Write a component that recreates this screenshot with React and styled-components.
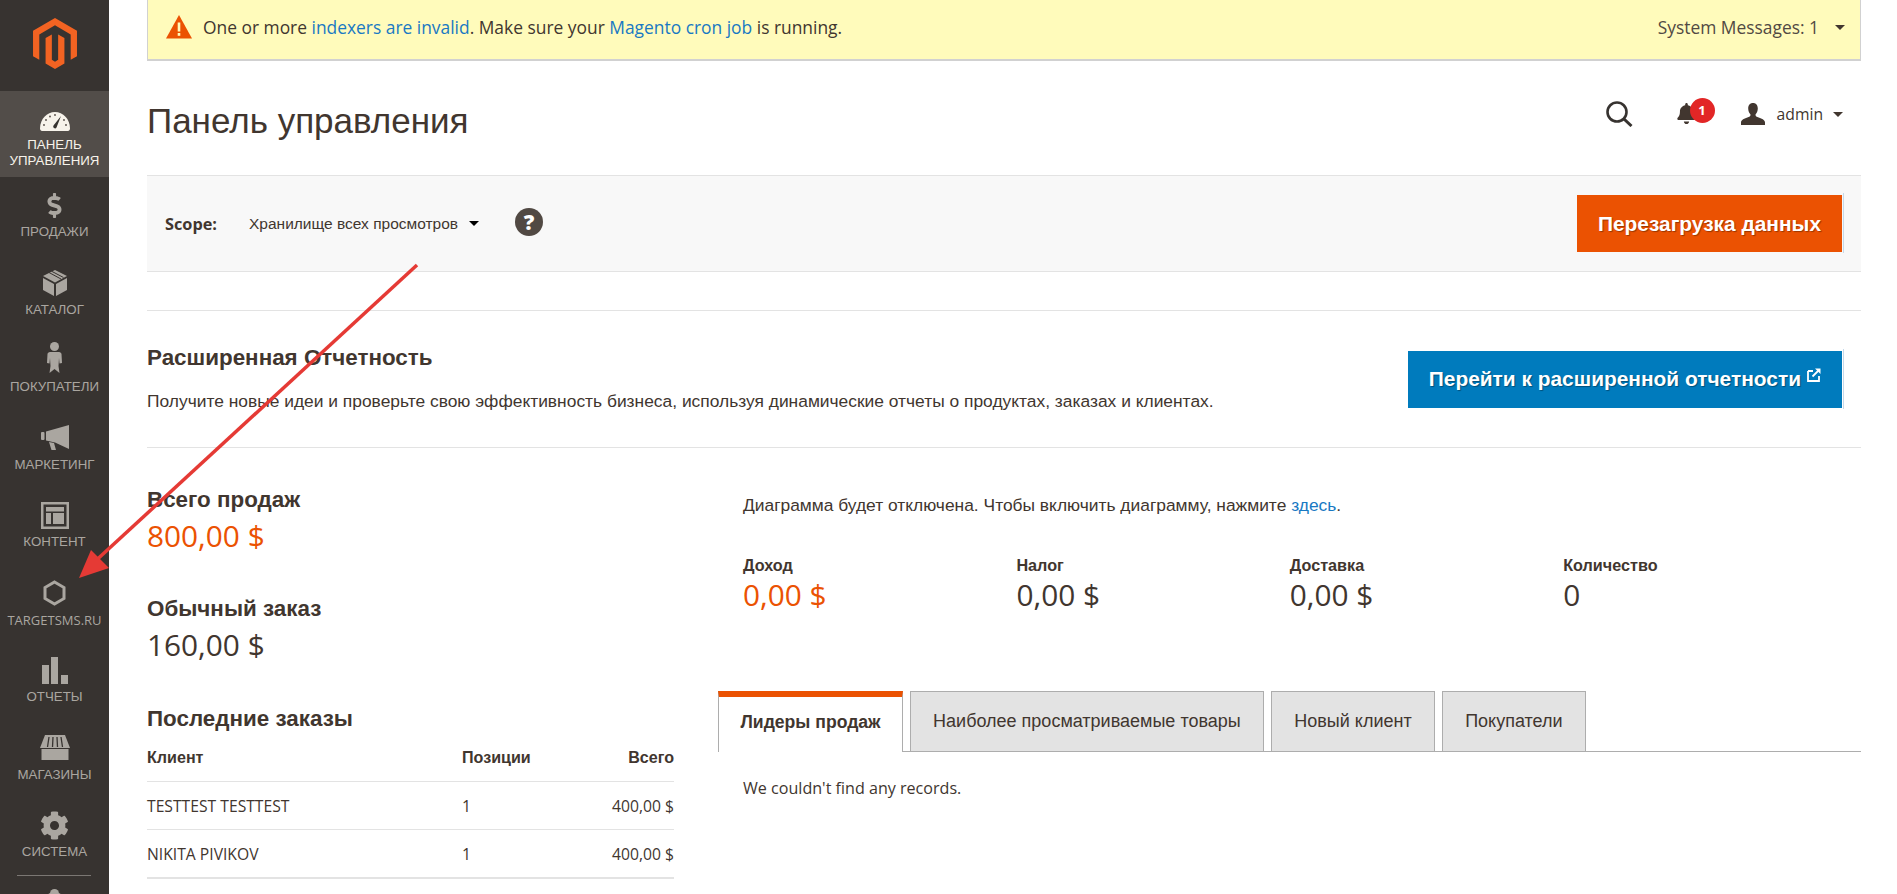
import React from 'react';
import styled, { createGlobalStyle } from 'styled-components';
import { FaDollarSign, FaCog, FaBell } from 'react-icons/fa';

const GlobalStyle = createGlobalStyle`
  html, body {
    margin: 0;
    padding: 0;
    background: #fff;
  }
  body {
    color: #41362f;
    font-family: "Open Sans", sans-serif;
  }
  * {
    box-sizing: border-box;
  }
`;

const CYR = '"Liberation Sans", Arial, sans-serif';
const LAT = '"Open Sans", "Noto Sans", sans-serif';

const Page = styled.div`
  position: relative;
  display: flex;
  width: 1897px;
  height: 894px;
  overflow: hidden;
`;

const Sidebar = styled.nav`
  flex: 0 0 109px;
  height: 894px;
  overflow: hidden;
  background: #373330;
`;

const LogoBox = styled.div`
  height: 91px;
  display: flex;
  justify-content: center;
  padding-top: 18px;
  svg {
    display: block;
    width: 44px;
    height: 51px;
    fill: #f26322;
  }
`;

const MenuItem = styled.a`
  display: flex;
  flex-direction: column;
  align-items: center;
  height: ${(p) => (p.$active ? '86px' : '77.5px')};
  padding-top: ${(p) => (p.$active ? '12px' : '10px')};
  background: ${(p) => (p.$active ? '#524d49' : 'transparent')};
  color: ${(p) => (p.$active ? '#f7f3eb' : '#aaa6a0')};
`;

const MenuIcon = styled.span`
  display: flex;
  align-items: center;
  justify-content: center;
  height: 36px;
  padding-bottom: ${(p) => p.$lift || 0}px;
  svg {
    display: block;
    fill: currentColor;
  }
`;

const MenuLabel = styled.span`
  margin-top: ${(p) => (p.$active ? '-2px' : '1px')};
  font-family: ${(p) => (p.$latin ? LAT : CYR)};
  font-size: ${(p) => (p.$latin ? '13px' : '13.3px')};
  line-height: 16px;
  text-align: center;
  white-space: nowrap;
`;

const MenuDivider = styled.div`
  height: 1px;
  margin: 0.5px 18px 0 17px;
  background: #7b7773;
`;

const PartnersIcon = styled.div`
  display: flex;
  justify-content: center;
  margin-top: 13px;
  color: #aaa6a0;
  svg {
    display: block;
    fill: currentColor;
  }
`;

const Main = styled.main`
  flex: 1;
  min-width: 0;
  padding: 0 36px 0 38px;
`;

const Banner = styled.div`
  display: flex;
  align-items: center;
  justify-content: space-between;
  height: 61px;
  padding: 0 15px 5px 18px;
  background: #fffbbb;
  border-left: 1px solid #d1d1d1;
  border-right: 1px solid #d1d1d1;
  border-bottom: 2px solid #d1d1d1;
  font-size: 17.4px;
`;

const BannerText = styled.div`
  display: flex;
  align-items: center;
  gap: 11px;
  white-space: pre;
  svg {
    display: block;
  }
`;

const TextLink = styled.a`
  color: #1979c3;
`;

const SystemMessages = styled.div`
  display: flex;
  align-items: center;
  gap: 16px;
  color: #514943;
`;

const Caret = styled.i`
  display: block;
  width: 0;
  height: 0;
  border-left: ${(p) => p.$size || 5}px solid transparent;
  border-right: ${(p) => p.$size || 5}px solid transparent;
  border-top: ${(p) => p.$size || 5}px solid ${(p) => p.$color || '#41362f'};
`;

const PageHeader = styled.header`
  display: flex;
  align-items: center;
  justify-content: space-between;
  height: 114px;
  padding: 0 18px 0 0;
`;

const Title = styled.h1`
  margin: 6px 0 0;
  font-family: ${CYR};
  font-size: 35px;
  font-weight: 400;
  line-height: 42px;
  color: #41362f;
`;

const HeaderActions = styled.div`
  display: flex;
  align-items: center;
  margin-bottom: 8px;
`;

const SearchButton = styled.span`
  display: block;
  margin-right: 43px;
  svg {
    display: block;
  }
`;

const BellWrap = styled.span`
  position: relative;
  display: block;
  width: 20px;
  height: 22px;
  margin-right: 45px;
  color: #41362f;
  svg {
    display: block;
  }
`;

const Badge = styled.b`
  position: absolute;
  top: -5px;
  left: 14px;
  width: 25px;
  height: 25px;
  border-radius: 50%;
  background: #e22626;
  color: #fff;
  font-family: ${LAT};
  font-size: 13px;
  font-weight: 700;
  line-height: 25px;
  text-align: center;
`;

const UserMenu = styled.div`
  display: flex;
  align-items: center;
  font-size: 15.7px;
  color: #41362f;
  svg {
    display: block;
    margin-right: 12px;
  }
  ${Caret} {
    margin-left: 10px;
  }
`;

const ScopeBar = styled.div`
  display: flex;
  align-items: center;
  justify-content: space-between;
  height: 97px;
  padding: 0 19px 0 18px;
  background: #f8f8f8;
  border-top: 1px solid #e3e3e3;
  border-bottom: 1px solid #e3e3e3;
`;

const ScopeLeft = styled.div`
  display: flex;
  align-items: center;
`;

const ScopeLabel = styled.span`
  width: 84px;
  font-size: 16.3px;
  font-weight: 700;
  color: #41362f;
`;

const ScopeValue = styled.span`
  margin-right: 11px;
  font-family: ${CYR};
  font-size: 15.5px;
  color: #41362f;
`;

const HelpCircle = styled.span`
  width: 28px;
  height: 28px;
  margin: -3px 0 0 36px;
  border-radius: 50%;
  background: #514943;
  color: #fff;
  font-family: ${LAT};
  font-size: 21px;
  font-weight: 800;
  line-height: 28px;
  text-align: center;
`;

const ActionButton = styled.a`
  position: relative;
  display: flex;
  align-items: center;
  justify-content: center;
  gap: 6px;
  height: 57px;
  padding: 0 21px;
  background: ${(p) => (p.$blue ? '#007bbd' : '#eb5202')};
  color: #fff;
  font-family: ${CYR};
  font-size: 20.9px;
  font-weight: 700;
  text-shadow: 1px 1px 1px rgba(0, 0, 0, 0.35);
  white-space: nowrap;
  &::after {
    content: '';
    position: absolute;
    top: -2px;
    bottom: -1px;
    right: -2px;
    width: 1px;
    background: #c5d9ea;
  }
  svg {
    display: block;
    margin-bottom: 8px;
  }
`;

const AdvancedBox = styled.section`
  display: flex;
  align-items: center;
  justify-content: space-between;
  height: 138px;
  margin-top: 38px;
  padding-right: 19px;
  border-top: 1px solid #e3e3e3;
  border-bottom: 1px solid #e3e3e3;
`;

const SectionTitle = styled.h3`
  margin: 0;
  font-family: ${CYR};
  font-size: 22.4px;
  font-weight: 700;
  line-height: 24px;
  color: #41362f;
`;

const AdvancedDesc = styled.p`
  margin: 19px 0 0;
  font-family: ${CYR};
  font-size: 17.4px;
  line-height: 24px;
  color: #41362f;
`;

const Dashboard = styled.div`
  display: grid;
  grid-template-columns: 527px 1fr;
  column-gap: 44px;
  padding-top: 40px;
`;

const Totals = styled.div`
  margin-bottom: ${(p) => p.$gap}px;
`;

const BigValue = styled.div`
  margin-top: 4px;
  font-family: ${LAT};
  font-size: 29.8px;
  font-weight: 500;
  line-height: 40px;
  color: ${(p) => (p.$accent ? '#eb5202' : '#41362f')};
`;

const OrdersTable = styled.table`
  width: 100%;
  margin-top: 3px;
  border-collapse: collapse;
  table-layout: fixed;
`;

const Th = styled.th`
  width: ${(p) => p.$width || 'auto'};
  height: 47px;
  padding: 0;
  border-bottom: 1px solid #e3e3e3;
  font-family: ${CYR};
  font-size: 16.1px;
  font-weight: 700;
  text-align: ${(p) => (p.$right ? 'right' : 'left')};
  color: #41362f;
`;

const Td = styled.td`
  height: ${(p) => (p.$last ? '49px' : '48px')};
  padding: 1px 0 0;
  border-bottom: ${(p) => (p.$last ? '2px' : '1px')} solid #e3e3e3;
  font-family: ${LAT};
  font-size: 15.7px;
  text-align: ${(p) => (p.$right ? 'right' : 'left')};
  color: #41362f;
`;

const RightColumn = styled.div`
  padding-top: 5px;
`;

const ChartNote = styled.p`
  margin: 0 0 0 25px;
  font-family: ${CYR};
  font-size: 17.4px;
  line-height: 24px;
  color: #41362f;
`;

const StatsGrid = styled.div`
  display: grid;
  grid-template-columns: repeat(4, 273.4px);
  margin: 36px 0 0 25px;
`;

const StatLabel = styled.div`
  font-family: ${CYR};
  font-size: 16.2px;
  font-weight: 700;
  line-height: 24px;
  color: #41362f;
`;

const StatValue = styled(BigValue)`
  margin-top: -2px;
`;

const TabBar = styled.div`
  display: flex;
  gap: 6.5px;
  height: 61px;
  margin-top: 76px;
  border-bottom: 1px solid #adadad;
`;

const Tab = styled.div`
  height: ${(p) => (p.$active ? '61px' : '60px')};
  padding: ${(p) => (p.$active ? '0 21.5px' : '0 22.5px')};
  border: 1px solid #adadad;
  border-top: ${(p) => (p.$active ? '6px solid #eb5202' : '1px solid #adadad')};
  border-bottom: ${(p) => (p.$active ? 'none' : '0')};
  background: ${(p) => (p.$active ? '#fff' : '#e3e3e3')};
  font-family: ${CYR};
  font-size: ${(p) => (p.$active ? '17.6px' : '18px')};
  font-weight: ${(p) => (p.$active ? 700 : 400)};
  line-height: ${(p) => (p.$active ? '51px' : '58px')};
  color: #41362f;
  white-space: nowrap;
`;

const EmptyNote = styled.p`
  margin: 24px 0 0 25px;
  font-family: ${LAT};
  font-size: 16.1px;
  line-height: 24px;
  color: #41362f;
`;

const ArrowOverlay = styled.svg`
  position: absolute;
  top: 0;
  left: 0;
  pointer-events: none;
`;

const MagentoLogo = () => (
  <svg viewBox="1.6 0 20.8 24">
    <path d="M12 24l-4.455-2.572v-12l2.97-1.715v12.001l1.485.902 1.485-.902V7.713l2.971 1.715v12L12 24zM22.391 6v12l-2.969 1.714V7.713L12 3.43 4.574 7.713v12.001L1.609 18V6L12 0l10.391 6z" />
  </svg>
);

const GaugeIcon = () => (
  <svg width="30" height="20" viewBox="0 0 30 20">
    <path d="M2 20c-1 0-2-1-2-2.5C0 8 7 1 15 1s15 7 15 16.500c0 1.500-1 2.500-2 2.500z" />
    <path d="M13.500 14.500L21 5l-4.500 11.500a1.800 1.800 0 0 1-3-2z" fill="#373330" />
    <g fill="#514943">
      <circle cx="4" cy="14" r="0.9" />
      <circle cx="6" cy="9" r="0.9" />
      <circle cx="10" cy="5.500" r="0.9" />
      <circle cx="15" cy="4" r="0.9" />
      <circle cx="26" cy="14" r="0.9" />
      <circle cx="24" cy="9" r="0.9" />
    </g>
  </svg>
);

const BoxIcon = () => (
  <svg width="24" height="26" viewBox="0 0 24 26">
    <path d="M12 0l12 6-12 6.500L0 6z" />
    <path d="M0 8l11 6v12L0 20zM24 8l-11 6v12l11-6z" />
    <path d="M6 2.500l12 6.500M8.500 1.200l12 6.300" stroke="#373330" strokeWidth="1" fill="none" />
  </svg>
);

const CustomerIcon = () => (
  <svg width="15" height="31" viewBox="0 0 15 31">
    <circle cx="7.500" cy="4.500" r="4.500" />
    <path d="M3 10h9c1.500 0 2.300 1 2.500 2l.5 9-2.500.5L12 16l-.5 8 1 7-5-4-5 4 1-7-.5-8-.500 5.500L0 21l.5-9C.7 11 1.500 10 3 10z" />
  </svg>
);

const MegaphoneIcon = () => (
  <svg width="28" height="25" viewBox="0 0 28 25">
    <rect x="0" y="7" width="3.500" height="8" rx="1" />
    <path d="M5 6.500L28 0v24L14 17.500v0L5 15.500z" />
    <path d="M8 17l5 1 2 7h-4.500z" />
  </svg>
);

const ContentIcon = () => (
  <svg width="28" height="27" viewBox="0 0 28 27">
    <path d="M0 0h28v27H0zM2.500 2.500v22h23v-22z" fillRule="evenodd" />
    <rect x="5" y="5" width="18" height="4.500" />
    <rect x="5" y="11" width="5" height="11" />
    <rect x="12" y="11" width="11" height="11" />
  </svg>
);

const HexIcon = () => (
  <svg width="23" height="26" viewBox="0 0 23 26">
    <path d="M11.500 2l9.500 5.500v11L11.500 24 2 18.500v-11z" fill="none" stroke="currentColor" strokeWidth="3" />
  </svg>
);

const BarsIcon = () => (
  <svg width="26" height="27" viewBox="0 0 26 27">
    <rect x="0" y="8" width="7" height="19" />
    <rect x="9" y="0" width="7" height="27" />
    <rect x="19" y="18" width="7" height="9" />
  </svg>
);

const StoreIcon = () => (
  <svg width="30" height="25" viewBox="0 0 30 25">
    <path d="M5 0h20l5 13H0z" />
    <path d="M9 2L7.500 12M13 2l-.5 10M17 2l.5 10M21 2l1.500 10" stroke="#373330" strokeWidth="1.300" fill="none" />
    <path d="M1.500 14h27v11h-27z" />
  </svg>
);

const PartnersGlyph = () => (
  <svg width="23" height="8" viewBox="0 0 23 8">
    <circle cx="11.500" cy="4.500" r="4.500" />
    <path d="M0 8l7-4h9l7 4z" />
  </svg>
);

const WarningIcon = () => (
  <svg width="26" height="24" viewBox="0 0 26 24">
    <path d="M13 0l13 23.500H0z" fill="#eb5202" />
    <rect x="11.700" y="7.500" width="2.600" height="9" fill="#fffbbb" />
    <rect x="11.700" y="18" width="2.600" height="2.800" fill="#fffbbb" />
  </svg>
);

const SearchIcon = () => (
  <svg width="27" height="26" viewBox="0 0 27 26">
    <circle cx="11" cy="11" r="9.500" fill="none" stroke="#373330" strokeWidth="2.600" />
    <path d="M18 18l7.500 7" stroke="#373330" strokeWidth="3" fill="none" />
  </svg>
);

const UserIcon = () => (
  <svg width="24" height="22" viewBox="0 0 24 22" fill="#41362f">
    <path d="M12 0c3 0 4.800 2.200 4.800 5.500 0 2.500-1 4.700-2.300 6 0 1.500.5 2 2.500 2.800 3.500 1.300 7 2.500 7 5.200V22H0v-2.500c0-2.700 3.500-3.900 7-5.200 2-.8 2.500-1.300 2.500-2.800-1.300-1.300-2.300-3.500-2.300-6C7.200 2.200 9 0 12 0z" />
  </svg>
);

const ExternalIcon = () => (
  <svg width="14" height="14" viewBox="0 0 14 14">
    <path d="M1 3h5M1 3v10h11V8" fill="none" stroke="#fff" strokeWidth="1.800" />
    <path d="M5.500 8.500L12 2" fill="none" stroke="#fff" strokeWidth="1.800" />
    <path d="M8 0.500h5.500V6z" fill="#fff" />
  </svg>
);

const menuItems = [
  { label: 'ПРОДАЖИ', icon: <FaDollarSign size={25} /> },
  { label: 'КАТАЛОГ', icon: <BoxIcon /> },
  { label: 'ПОКУПАТЕЛИ', icon: <CustomerIcon />, lift: 5 },
  { label: 'МАРКЕТИНГ', icon: <MegaphoneIcon /> },
  { label: 'КОНТЕНТ', icon: <ContentIcon /> },
  { label: 'TARGETSMS.RU', icon: <HexIcon />, latin: true },
  { label: 'ОТЧЕТЫ', icon: <BarsIcon /> },
  { label: 'МАГАЗИНЫ', icon: <StoreIcon /> },
  { label: 'СИСТЕМА', icon: <FaCog size={29} /> },
];

const stats = [
  { label: 'Доход', value: '0,00 $', accent: true },
  { label: 'Налог', value: '0,00 $' },
  { label: 'Доставка', value: '0,00 $' },
  { label: 'Количество', value: '0' },
];

const orders = [
  { client: 'TESTTEST TESTTEST', items: '1', total: '400,00 $' },
  { client: 'NIKITA PIVIKOV', items: '1', total: '400,00 $', last: true },
];

const tabs = ['Лидеры продаж', 'Наиболее просматриваемые товары', 'Новый клиент', 'Покупатели'];

const App = () => (
  <Page>
    <GlobalStyle />
    <Sidebar>
      <LogoBox>
        <MagentoLogo />
      </LogoBox>
      <MenuItem $active>
        <MenuIcon>
          <GaugeIcon />
        </MenuIcon>
        <MenuLabel $active>
          ПАНЕЛЬ
          <br />
          УПРАВЛЕНИЯ
        </MenuLabel>
      </MenuItem>
      {menuItems.map((item) => (
        <MenuItem key={item.label}>
          <MenuIcon $lift={item.lift}>{item.icon}</MenuIcon>
          <MenuLabel $latin={item.latin}>{item.label}</MenuLabel>
        </MenuItem>
      ))}
      <MenuDivider />
      <PartnersIcon>
        <PartnersGlyph />
      </PartnersIcon>
    </Sidebar>

    <Main>
      <Banner>
        <BannerText>
          <WarningIcon />
          <span>
            One or more <TextLink>indexers are invalid</TextLink>. Make sure your{' '}
            <TextLink>Magento cron job</TextLink> is running.
          </span>
        </BannerText>
        <SystemMessages>
          System Messages: 1
          <Caret />
        </SystemMessages>
      </Banner>

      <PageHeader>
        <Title>Панель управления</Title>
        <HeaderActions>
          <SearchButton>
            <SearchIcon />
          </SearchButton>
          <BellWrap>
            <FaBell size={21} />
            <Badge>1</Badge>
          </BellWrap>
          <UserMenu>
            <UserIcon />
            admin
            <Caret />
          </UserMenu>
        </HeaderActions>
      </PageHeader>

      <ScopeBar>
        <ScopeLeft>
          <ScopeLabel>Scope:</ScopeLabel>
          <ScopeValue>Хранилище всех просмотров</ScopeValue>
          <Caret $color="#000" />
          <HelpCircle>?</HelpCircle>
        </ScopeLeft>
        <ActionButton>Перезагрузка данных</ActionButton>
      </ScopeBar>

      <AdvancedBox>
        <div>
          <SectionTitle>Расширенная Отчетность</SectionTitle>
          <AdvancedDesc>
            Получите новые идеи и проверьте свою эффективность бизнеса, используя динамические отчеты о продуктах,
            заказах и клиентах.
          </AdvancedDesc>
        </div>
        <ActionButton $blue>
          Перейти к расширенной отчетности
          <ExternalIcon />
        </ActionButton>
      </AdvancedBox>

      <Dashboard>
        <div>
          <Totals $gap={41}>
            <SectionTitle>Всего продаж</SectionTitle>
            <BigValue $accent>800,00 $</BigValue>
          </Totals>
          <Totals $gap={42}>
            <SectionTitle>Обычный заказ</SectionTitle>
            <BigValue>160,00 $</BigValue>
          </Totals>
          <SectionTitle>Последние заказы</SectionTitle>
          <OrdersTable>
            <thead>
              <tr>
                <Th $width="315px">Клиент</Th>
                <Th>Позиции</Th>
                <Th $right>Всего</Th>
              </tr>
            </thead>
            <tbody>
              {orders.map((order) => (
                <tr key={order.client}>
                  <Td $last={order.last}>{order.client}</Td>
                  <Td $last={order.last}>{order.items}</Td>
                  <Td $last={order.last} $right>
                    {order.total}
                  </Td>
                </tr>
              ))}
            </tbody>
          </OrdersTable>
        </div>

        <RightColumn>
          <ChartNote>
            Диаграмма будет отключена. Чтобы включить диаграмму, нажмите <TextLink>здесь</TextLink>.
          </ChartNote>
          <StatsGrid>
            {stats.map((stat) => (
              <div key={stat.label}>
                <StatLabel>{stat.label}</StatLabel>
                <StatValue $accent={stat.accent}>{stat.value}</StatValue>
              </div>
            ))}
          </StatsGrid>
          <TabBar>
            {tabs.map((tab, index) => (
              <Tab key={tab} $active={index === 0}>
                {tab}
              </Tab>
            ))}
          </TabBar>
          <EmptyNote>We couldn't find any records.</EmptyNote>
        </RightColumn>
      </Dashboard>
    </Main>

    {/* annotation arrow drawn over the screenshot */}
    <ArrowOverlay width="1897" height="894" viewBox="0 0 1897 894">
      <path d="M417 265L90 566" stroke="#e53a35" strokeWidth="3.500" fill="none" />
      <path d="M79 578L91 550L109 568z" fill="#e53a35" />
    </ArrowOverlay>
  </Page>
);

export default App;
